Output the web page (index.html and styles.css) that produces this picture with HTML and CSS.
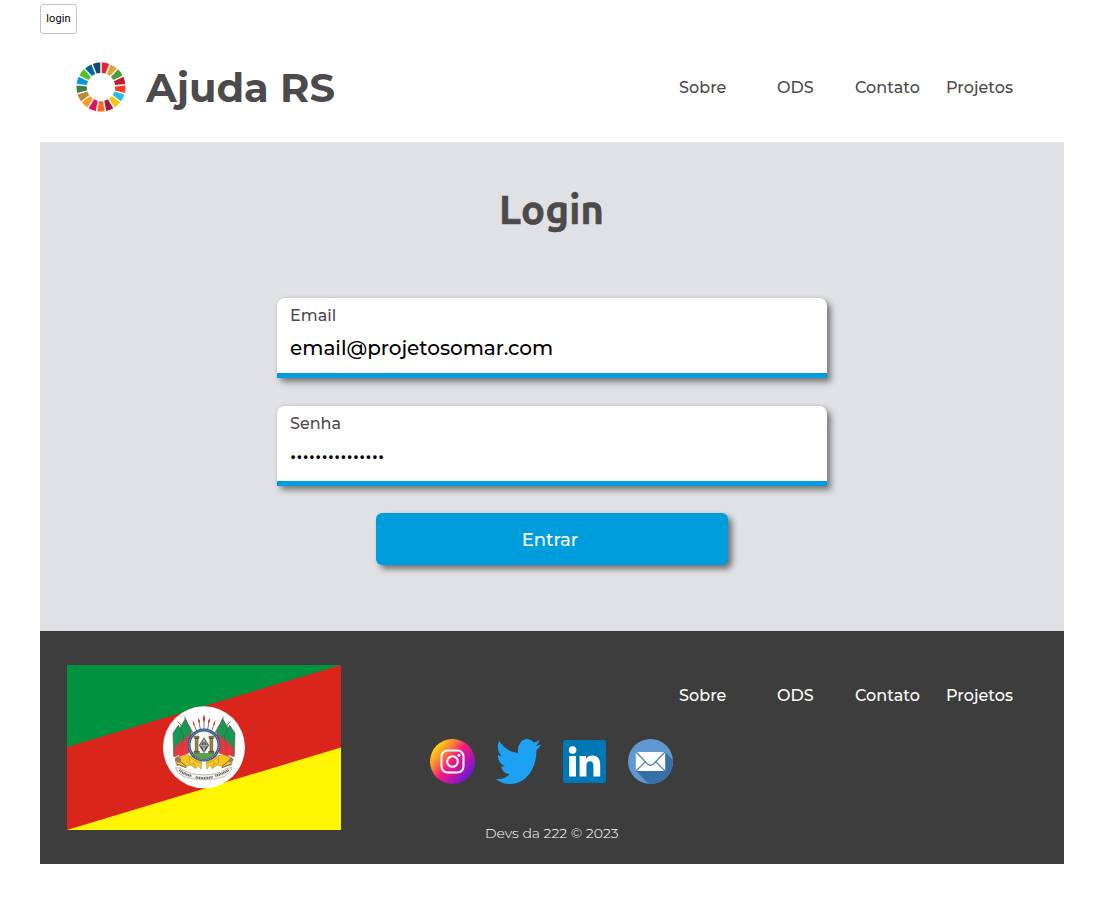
FILE: index.html
```html
<!DOCTYPE html>
<html lang="pt-BR">
<head>
<meta charset="utf-8">
<title>Ajuda RS</title>
<link rel="stylesheet" href="styles.css">
</head>
<body>
<div class="page">
  <button class="page-tab">login</button>
  <header class="header">
    <svg class="wheel" viewBox="-25 -25 50 50">
      <defs><path id="seg" d="M-3.8-24.2Q0-25 3.8-24.2L1.9-14Q0-14.4-1.9-14Z"/></defs>
      <use href="#seg" fill="#e5243b" transform="rotate(10.6)"/>
      <use href="#seg" fill="#dda63a" transform="rotate(31.8)"/>
      <use href="#seg" fill="#4c9f38" transform="rotate(52.9)"/>
      <use href="#seg" fill="#c5192d" transform="rotate(74.1)"/>
      <use href="#seg" fill="#ff3a21" transform="rotate(95.3)"/>
      <use href="#seg" fill="#26bde2" transform="rotate(116.5)"/>
      <use href="#seg" fill="#fcc30b" transform="rotate(137.6)"/>
      <use href="#seg" fill="#a21942" transform="rotate(158.8)"/>
      <use href="#seg" fill="#fd6925" transform="rotate(180)"/>
      <use href="#seg" fill="#dd1367" transform="rotate(201.2)"/>
      <use href="#seg" fill="#fd9d24" transform="rotate(222.4)"/>
      <use href="#seg" fill="#bf8b2e" transform="rotate(243.5)"/>
      <use href="#seg" fill="#3f7e44" transform="rotate(264.7)"/>
      <use href="#seg" fill="#0a97d9" transform="rotate(285.9)"/>
      <use href="#seg" fill="#56c02b" transform="rotate(307.1)"/>
      <use href="#seg" fill="#00689d" transform="rotate(328.2)"/>
      <use href="#seg" fill="#19486a" transform="rotate(349.4)"/>
    </svg>
    <div class="brand">Ajuda RS</div>
    <nav class="nav"><a>Sobre</a><a>ODS</a><a>Contato</a><a>Projetos</a></nav>
  </header>
  <main class="main">
    <h1 class="title">Login</h1>
    <label class="field"><span class="label">Email</span><span class="value">email@projetosomar.com</span></label>
    <label class="field"><span class="label">Senha</span><span class="value">•••••••••••••••</span></label>
    <button class="submit">Entrar</button>
  </main>
  <footer class="footer">
    <svg class="flag" viewBox="0 0 274 165">
      <path fill="#da251d" d="M0 0h274v165H0z"/>
      <path fill="#00923f" d="M0 0h274L0 82z"/>
      <path fill="#fff500" d="M274 82.5v82.5H0z"/>
      <g transform="translate(88 33) scale(.33333)">
        <circle cx="147" cy="148" r="123" fill="#fff"/>
        <g stroke="#8a7470" stroke-width="3" fill="none">
          <path d="M147 54v40M131 66l5 28M163 66l-5 28M115 74l10 26M179 74l-10 26M102 82l15 28M192 82l-15 28M88 56l24 50M206 56l-24 50M68 70l44 54M226 70l-44 54"/>
        </g>
        <path fill="#bd4037" d="M147 49l4 15-4 9-4-9zM130 59l5 10-1 9-5-9zM164 59l1 10-5 9-1-9zM113 66l6 12-4 5zM181 66l-1 16-5-4z"/>
        <g id="banner">
          <path fill="#159957" stroke="#69503a" stroke-width="2" d="M91 62l18 40-7 45-26 26-3-80z"/>
          <path fill="#e6363f" d="M106 104l-4 62-30 11 5-38z"/>
          <path fill="#159957" stroke="#69503a" stroke-width="2" d="M70 82l16 32-7 42-23 19-2-70z"/>
          <path fill="#e6363f" d="M83 122l-4 46-22 10 2-28z"/>
        </g>
        <use href="#banner" transform="translate(294) scale(-1 1)"/>
        <path fill="#f5c51b" stroke="#a78822" stroke-width="1.5" d="M64 182q24-17 43-8l33 14-4 16-12-8-5 14-12-10-18 8-14-8-9 3zM230 182q-24-17-43-8l-33 14 4 16 12-8 5 14 12-10 18 8 14-8 9 3z"/>
        <circle cx="147" cy="141" r="45" fill="#f4f6f0" stroke="#3c5a86" stroke-width="9"/>
        <circle cx="147" cy="141" r="45" fill="none" stroke="#9db4ce" stroke-width="3" stroke-dasharray="3 3"/>
        <path fill="#61a052" d="M115 165h64q-8 18-32 18t-32-18z"/>
        <g fill="#a98542" stroke="#332e22" stroke-width="1.5"><path d="M121 120h8v41h-8zM165 120h8v41h-8zM118 115h14v6h-14zM162 115h14v6h-14zM117 160h16v5h-16zM161 160h16v5h-16z"/></g>
        <path fill="#454b50" d="M147 118l15 24-15 24-15-24z"/>
        <path stroke="#e1e2d9" stroke-width="2" fill="none" d="M138 138l9-12 9 12-9 16zM135 143h24M147 121v42"/>
        <path fill="#f3c92a" stroke="#a78822" stroke-width="1.5" d="M104 176q-4 18 3 26l10-8 5 18 8-10 8 12 2-18q-18-2-36-20zM190 176q4 18-3 26l-10-8-5 18-8-10-8 12-2-18q18-2 36-20z"/>
        <path stroke="#77674b" stroke-width="3" fill="none" d="M64 181l30 24M231 181l-30 24M62 197l32 12M232 197l-32 12"/>
        <path fill="#f7f3ec" stroke="#8c8074" stroke-width="1.5" d="M62 209q15-3 31 12 54 20 107 0 16-15 31-12l-5 12-18 15q-61 19-122 0l-20-15z"/>
        <path stroke="#575354" stroke-width="7" stroke-dasharray="3 2" fill="none" d="M74 216q10 12 36 18M122 238q25 5 51-1M181 233q28-7 40-18"/>
        <path fill="#927e68" d="M60 180l9-6 10 10-4 10-15-3zM227 176l9 7-5 11-12-4z"/>
      </g>
    </svg>
    <div class="social">
      <svg class="round" viewBox="0 0 45 45">
        <defs><linearGradient id="ig" x1=".05" y1=".15" x2=".9" y2=".85"><stop offset=".04" stop-color="#ffe012"/><stop offset=".27" stop-color="#ff8a30"/><stop offset=".5" stop-color="#f51c80"/><stop offset=".73" stop-color="#b916aa"/><stop offset="1" stop-color="#5a1bdf"/></linearGradient></defs>
        <circle cx="22.5" cy="22.5" r="22.5" fill="url(#ig)"/>
        <rect x="11.5" y="11.5" width="22" height="22" rx="6" fill="none" stroke="#fff" stroke-width="2"/>
        <circle cx="22.5" cy="22.5" r="5.3" fill="none" stroke="#fff" stroke-width="2"/><circle cx="29" cy="16.2" r="1.5" fill="#fff"/>
      </svg>
      <svg class="twitter" viewBox="0 2.25 24 19.5" preserveAspectRatio="none"><path fill="#1da1f2" d="M23.953 4.57a10 10 0 0 1-2.825.775 4.958 4.958 0 0 0 2.163-2.723c-.951.555-2.005.959-3.127 1.184a4.92 4.92 0 0 0-8.384 4.482C7.69 8.095 4.067 6.13 1.64 3.162a4.822 4.822 0 0 0-.666 2.475c0 1.71.87 3.213 2.188 4.096a4.904 4.904 0 0 1-2.228-.616v.06a4.923 4.923 0 0 0 3.946 4.827 4.996 4.996 0 0 1-2.212.085 4.936 4.936 0 0 0 4.604 3.417 9.867 9.867 0 0 1-6.102 2.105c-.39 0-.779-.023-1.17-.067a13.995 13.995 0 0 0 7.557 2.209c9.053 0 13.998-7.496 13.998-13.985 0-.21 0-.42-.015-.63A9.935 9.935 0 0 0 24 4.59z"/></svg>
      <svg class="linkedin" viewBox="0 0 43 43"><rect width="43" height="43" rx="2.5" fill="#0077b5"/><path fill="#fff" d="M6.200 16h6.800v20.500H6.200zM9.600 6.200a3.800 3.800 0 1 1 0 7.600 3.800 3.800 0 0 1 0-7.600zM16.600 16h6.400v2.800h.1c.9-1.700 3-3.300 6.200-3.300 6.300 0 7.900 4.200 7.900 9.700v11.300h-6.800V26.500c0-2.400-.1-5.300-3.300-5.300s-3.700 2.400-3.700 5.100v10.200h-6.800z"/></svg>
      <svg class="round mail" viewBox="0 0 45 45">
        <defs><clipPath id="disc"><circle cx="22.5" cy="22.5" r="22.5"/></clipPath></defs>
        <g clip-path="url(#disc)"><path fill="#6098d2" d="M0 0h45v45H0z"/><path fill="#386fa8" d="M37 13l18 18-15 25H32L8 32z"/></g>
        <path fill="#fff" d="M7.8 13h29.4v19H7.8z"/><path fill="none" stroke="#477fb9" stroke-width="1.2" d="M8 13l11.5 12q3 2.600 6 0L37 13M8 32l9.5-9.5M37 32l-9.5-9.5"/>
      </svg>
    </div>
    <nav class="nav"><a>Sobre</a><a>ODS</a><a>Contato</a><a>Projetos</a></nav>
    <p class="copyright">Devs da 222 © 2023</p>
  </footer>
</div>
</body>
</html>
```
FILE: styles.css
```css
* { box-sizing: border-box; }
body { margin: 0; background: #fff; font-family: Montserrat, Inter, sans-serif; color: #4d4a4b; }
.page { width: 1024px; margin: 0 auto; padding-top: 4px; }
.page-tab { display: block; width: 37px; height: 30px; padding: 0 0 2px; border: 1px solid #c4c4c4; border-radius: 3px; background: #fff; color: #000; font: 11px Roboto, sans-serif; letter-spacing: .15px; }
.header { display: flex; height: 108px; padding: 28px 36px 0; }
.wheel { width: 50px; height: 50px; }
.brand { width: 260px; margin-left: 20px; font-size: 40px; line-height: 52px; font-weight: 700; white-space: nowrap; }
.nav { display: grid; grid-template-columns: 98px 78px 91px 68px; font-size: 16px; line-height: 20px; font-weight: 500; letter-spacing: .06px; white-space: nowrap; }
.header .nav { margin: 16px 0 0 273px; }
.main { display: flex; flex-direction: column; align-items: center; height: 489px; padding-top: 41px; background: #e0e1e5; }
.title { margin: 0 1px 61px 0; font: 700 40px/54px Ubuntu, "Noto Sans", sans-serif; letter-spacing: .2px; -webkit-text-stroke: .6px #4d4a4b; }
.field { display: flex; flex-direction: column; width: 550px; height: 80px; padding: 7px 13px 0; margin-bottom: 28px; background: #fff; border-bottom: 5px solid #009ddd; border-radius: 8px 8px 0 0; box-shadow: 4px 4px 6px rgba(0,0,0,.45), 0 0 5px rgba(0,0,0,.08); white-space: nowrap; }
.label { font-size: 16px; line-height: 22px; font-weight: 500; }
.value { margin-top: 8px; color: #000; font-size: 20px; line-height: 26px; font-weight: 500; }
.submit { width: 352px; height: 52px; margin-top: -1px; padding: 1px 4px 0 0; border: 0; border-radius: 6px; background: #009ddd; color: #fff; font: 500 18px Montserrat, Inter, sans-serif; box-shadow: 4px 4px 6px rgba(0,0,0,.5); }
.footer { display: grid; grid-template-columns: 350px 250px 1fr; grid-template-rows: 74px 45px 1fr; height: 233px; padding: 34px 0 0 27px; background: #3d3d3d; color: #fff; }
.flag { width: 274px; height: 165px; grid-column: 1; grid-row: 1 / 4; }
.footer .nav { grid-column: 3; grid-row: 1; margin: 21px 0 0 12px; }
.social { grid-column: 2; grid-row: 2; display: flex; align-items: center; padding-left: 13px; }
.round { width: 45px; height: 45px; flex: none; }
.twitter { width: 45px; height: 45px; margin-left: 21px; flex: none; }
.linkedin { width: 43px; height: 43px; margin-left: 22px; flex: none; }
.mail { margin-left: 22px; }
.copyright { grid-column: 2; grid-row: 3; justify-self: start; margin: 40px 0 0 68px; font-size: 14px; line-height: 18px; font-weight: 300; white-space: nowrap; }
```
